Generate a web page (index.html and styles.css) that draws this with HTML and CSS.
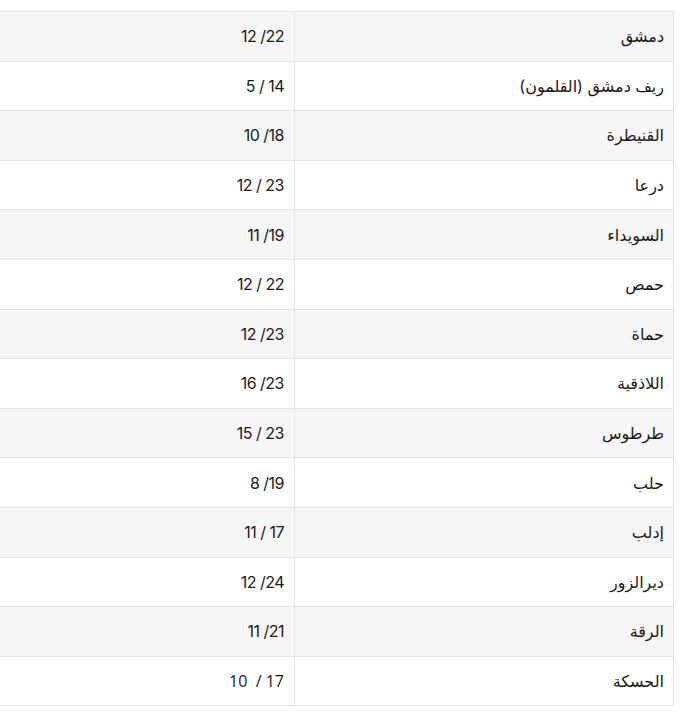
FILE: index.html
```html
<!DOCTYPE html>
<html lang="ar" dir="rtl">
<head>
<meta charset="utf-8">
<link rel="stylesheet" href="styles.css">
</head>
<body>
<div class="wrap">
<table class="weather">
<tbody>
<tr><td class="city">دمشق</td><td class="temp">22/ 12</td></tr>
<tr><td class="city">ريف دمشق (القلمون)</td><td class="temp">14 / 5</td></tr>
<tr><td class="city">القنيطرة</td><td class="temp">18/ 10</td></tr>
<tr><td class="city">درعا</td><td class="temp">23 / 12</td></tr>
<tr><td class="city">السويداء</td><td class="temp">19/ 11</td></tr>
<tr><td class="city">حمص</td><td class="temp">22 / 12</td></tr>
<tr><td class="city">حماة</td><td class="temp">23/ 12</td></tr>
<tr><td class="city">اللاذقية</td><td class="temp">23/ 16</td></tr>
<tr><td class="city">طرطوس</td><td class="temp">23 / 15</td></tr>
<tr><td class="city">حلب</td><td class="temp">19/ 8</td></tr>
<tr><td class="city">إدلب</td><td class="temp">17 / 11</td></tr>
<tr><td class="city">ديرالزور</td><td class="temp">24/ 12</td></tr>
<tr><td class="city">الرقة</td><td class="temp">21/ 11</td></tr>
<tr><td class="city">الحسكة</td><td class="temp alt">17 /&nbsp; 10</td></tr>
</tbody>
</table>
</div>
</body>
</html>
```
FILE: styles.css
```css
html, body {
  margin: 0;
  padding: 0;
  background: #ffffff;
}
.wrap {
  padding: 11px 13px 0 0;
}
.weather {
  width: 674px;
  border-collapse: collapse;
  font-family: "Inter", "DejaVu Sans", sans-serif;
  font-size: 16px;
  color: #1a1a1a;
}
.weather tr {
  height: 49.6px;
}
.weather tr:nth-child(odd) {
  background: #f6f6f6;
}
.weather td {
  border-top: 1px solid #e3e3e3;
  border-bottom: 1px solid #e3e3e3;
  padding: 0 9px;
  text-align: right;
  vertical-align: middle;
}
.weather td.city {
  width: 360px;
  border-right: 1px solid #e6e6e6;
  border-left: 1px solid #e6e6e6;
}
.weather td.temp {
  padding-right: 10px;
  letter-spacing: -0.5px;
}
.weather td.alt {
  font-family: "Open Sans", "DejaVu Sans", sans-serif;
  letter-spacing: 0;
}
```
